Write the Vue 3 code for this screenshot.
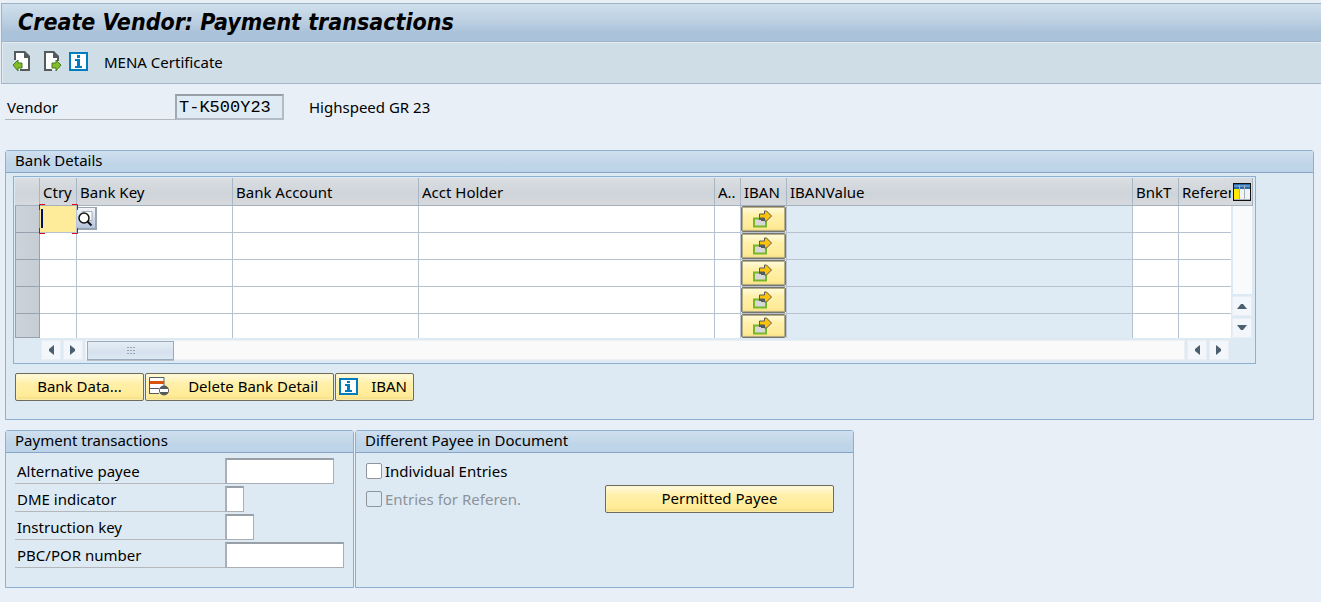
<script setup>
import { ref } from 'vue'

const vendor = ref('T-K500Y23')
const individual = ref(false)
const rows = [1, 2, 3, 4, 5]
const fields = [
  { id: 'alt-payee', label: 'Alternative payee', size: 'w-alt' },
  { id: 'dme', label: 'DME indicator', size: 'w-dme' },
  { id: 'instr-key', label: 'Instruction key', size: 'w-key' },
  { id: 'pbc', label: 'PBC/POR number', size: 'w-pbc' }
]
</script>

<template>
  <div class="window">
    <header class="titlebar"><h1>Create Vendor: Payment transactions</h1></header>

    <nav class="toolbar">
      <button class="tool" aria-label="Previous screen">
        <svg width="20" height="21" viewBox="0 0 20 21">
          <path d="M3 1h10l5 5v13H3z" fill="#fff" />
          <path d="M3 10V1h9M17 6v13H8" fill="none" stroke="#555a5e" stroke-width="2" />
          <path d="M12 0h1l5 5v2h-6z" fill="#555a5e" />
          <path d="M0 9h6v11H0z" fill="#cfdde7" />
          <path d="M1 14l5-5v3h4v5H6v3z" fill="#86bc25" stroke="#3f7d26" />
        </svg>
      </button>
      <button class="tool tool-next" aria-label="Next screen">
        <svg width="20" height="21" viewBox="0 0 20 21">
          <path d="M2 1h10l5 5v13H2z" fill="#fff" />
          <path d="M10 19H3V1h8M16 6v4" fill="none" stroke="#555a5e" stroke-width="2" />
          <path d="M11 0h1l5 5v2h-6z" fill="#555a5e" />
          <path d="M19 14l-5-5v3h-4v5h4v3z" fill="#86bc25" stroke="#3f7d26" />
        </svg>
      </button>
      <button class="tool" aria-label="Information">
        <svg width="19" height="19" viewBox="0 0 19 19">
          <path d="M1 1h17v17H1z" fill="#fff" stroke="#007cc0" stroke-width="2" />
          <path d="M8 3h3v3H8zM6 7h5v7h2v2H6v-2h2V9H6z" fill="#007cc0" />
        </svg>
      </button>
      <button class="tool tool-text">MENA Certificate</button>
    </nav>

    <main>
      <div class="vendor">
        <label for="vendor">Vendor</label>
        <input id="vendor" v-model="vendor" readonly />
        <span>Highspeed GR 23</span>
      </div>

      <section class="group bank">
        <h2>Bank Details</h2>
        <div class="bank-body">
          <div class="grid-box">
            <div class="grid-top">
              <table>
                <colgroup>
                  <col class="c-sel" /><col class="c-ctry" /><col class="c-key" /><col class="c-acct" />
                  <col class="c-holder" /><col class="c-a" /><col class="c-iban" /><col />
                  <col class="c-bnkt" /><col class="c-ref" />
                </colgroup>
                <thead>
                  <tr>
                    <th></th><th>Ctry</th><th>Bank Key</th><th>Bank Account</th><th>Acct Holder</th>
                    <th>A..</th><th>IBAN</th><th>IBANValue</th><th>BnkT</th><th>Referen</th>
                  </tr>
                </thead>
                <tbody>
                  <tr v-for="r in rows" :key="r">
                    <td class="sel"></td>
                    <td :class="{ active: r === 1 }">
                      <input :aria-label="'Ctry ' + r" />
                      <template v-if="r === 1">
                        <svg class="corners" width="39" height="30" viewBox="0 0 39 30">
                          <path d="M.5 6V.5H6M33 .5h5.500V6M38.500 24v5.500H33M6 29.500H.5V24" fill="none" stroke="#e00010" />
                        </svg>
                        <i class="caret"></i>
                      </template>
                    </td>
                    <td>
                      <button v-if="r === 1" class="match" aria-label="Search country">
                        <svg width="18" height="20" viewBox="0 0 18 20">
                          <path d="M5 3.500h10v9H8" fill="#fff" stroke="#a2adba" />
                          <circle cx="7" cy="10" r="5" fill="#fff" stroke="#111" stroke-width="1.500" />
                          <path d="M10.500 13.500l4 4" stroke="#111" stroke-width="2" />
                        </svg>
                      </button>
                      <input :aria-label="'Bank Key ' + r" />
                    </td>
                    <td><input :aria-label="'Bank Account ' + r" /></td>
                    <td><input :aria-label="'Acct Holder ' + r" /></td>
                    <td><input :aria-label="'A ' + r" /></td>
                    <td class="iban-cell">
                      <button class="gold" :aria-label="'IBAN ' + r">
                        <svg width="22" height="18" viewBox="0 0 22 18">
                          <path d="M1 8.500h12v8H1z" fill="#d8d8d8" stroke="#77b82a" stroke-width="2" />
                          <path d="M6 8h6v3H8v-1H6z" fill="#555a5e" />
                          <path d="M6.500 4h5V1h2l5 5-5 5h-2V8h-5z" fill="#fdc20b" stroke="#555a5e" />
                        </svg>
                      </button>
                    </td>
                    <td class="readonly"></td>
                    <td><input :aria-label="'BnkT ' + r" /></td>
                    <td><input :aria-label="'Reference ' + r" /></td>
                  </tr>
                </tbody>
              </table>
              <div class="vscroll">
                <button class="config" aria-label="Table settings">
                  <svg width="18" height="18" viewBox="0 0 18 18">
                    <path d="M0 0h18v18H0z" fill="#101010" />
                    <path d="M1 1h16v16H1z" fill="#eef4fa" />
                    <path d="M1 1h16v5H1z" fill="#2a6aa8" />
                    <path d="M1 2h5v2H1zM7 2h4v2H7zM12 2h5v2h-5z" fill="#5e93cc" />
                    <path d="M1 6h5v11H1z" fill="#ffea00" />
                    <path d="M6.500 2v15M11.500 2v15M1 16.500h16" stroke="#a9b2ba" />
                  </svg>
                </button>
                <div class="vtrack"></div>
                <button class="arrow" aria-label="Scroll up"><svg width="10" height="6" viewBox="0 0 10 6"><path d="M0 6h10L6 1H4z" fill="#4b5f6e" /></svg></button>
                <button class="arrow" aria-label="Scroll down"><svg width="10" height="6" viewBox="0 0 10 6"><path d="M0 0h10L6 5H4z" fill="#4b5f6e" /></svg></button>
              </div>
            </div>
            <div class="hscroll">
              <button class="arrow" aria-label="First column"><svg width="6" height="10" viewBox="0 0 6 10"><path d="M6 0v10L1 6V4z" fill="#4b5f6e" /></svg></button>
              <button class="arrow" aria-label="Column right"><svg width="6" height="10" viewBox="0 0 6 10"><path d="M0 0v10l5-4V4z" fill="#4b5f6e" /></svg></button>
              <div class="htrack">
                <div class="thumb">
                  <svg width="8" height="7" viewBox="0 0 8 7"><path d="M0 .5h2M3 .5h2M6 .5h2M0 3.500h2M3 3.500h2M6 3.500h2M0 6.500h2M3 6.500h2M6 6.500h2" stroke="#98a6b4" /></svg>
                </div>
              </div>
              <button class="arrow" aria-label="Column left"><svg width="6" height="10" viewBox="0 0 6 10"><path d="M6 0v10L1 6V4z" fill="#4b5f6e" /></svg></button>
              <button class="arrow" aria-label="Last column"><svg width="6" height="10" viewBox="0 0 6 10"><path d="M0 0v10l5-4V4z" fill="#4b5f6e" /></svg></button>
            </div>
          </div>

          <div class="actions">
            <button class="gold b-data">Bank Data...</button>
            <button class="gold b-delete">
              <svg width="21" height="19" viewBox="0 0 21 19">
                <path d="M1 1h14v15H1z" fill="#fff" />
                <path d="M10 16.500H1M15 9V.5H.5V17M1 11.500h9" fill="none" stroke="#555a5e" />
                <path d="M1 4h14v3H1z" fill="#d9530f" />
                <circle cx="15" cy="13.500" r="5" fill="#555a5e" />
                <path d="M11 12h8v3h-8z" fill="#fff" />
              </svg>
              <span>Delete Bank Detail</span>
            </button>
            <button class="gold b-iban">
              <svg width="19" height="17" viewBox="0 0 19 17">
                <path d="M1 1h17v15H1z" fill="#fff" stroke="#007cc0" stroke-width="2" />
                <path d="M8 3h3v2H8zM6 6h5v6h2v2H6v-2h2V8H6z" fill="#007cc0" />
              </svg>
              <span>IBAN</span>
            </button>
          </div>
        </div>
      </section>

      <div class="lower">
        <section class="group payment">
          <h2>Payment transactions</h2>
          <div class="fields">
            <div v-for="f in fields" :key="f.id" class="field">
              <label :for="f.id">{{ f.label }}</label>
              <input :id="f.id" :class="f.size" />
            </div>
          </div>
        </section>
        <section class="group payee">
          <h2>Different Payee in Document</h2>
          <div class="payee-body">
            <div class="checks">
              <label><input v-model="individual" type="checkbox" />Individual Entries</label>
              <label class="off"><input type="checkbox" disabled />Entries for Referen.</label>
            </div>
            <button class="gold b-payee">Permitted Payee</button>
          </div>
        </section>
      </div>
    </main>
  </div>
</template>

<style>
body { background: #e8eff6; }
</style>

<style scoped>
* { box-sizing: border-box; }
.window {
  min-height: 100vh;
  padding: 3px 0 0 1px;
  background: #e8eff6;
  color: #000;
  font: 15px/20px "Noto Sans", "Open Sans", sans-serif;
}
button, input { font: inherit; color: inherit; margin: 0; padding: 0; border: 0; }
button { background: none; }
svg { display: block; flex: none; }
h1, h2 { margin: 0; }

.titlebar {
  height: 39px;
  padding: 0 16px;
  border: solid #9fb2c6;
  border-width: 1px 0 1px 1px;
  background: linear-gradient(#cfdfec, #bdd0e2 45%, #abc3da 75%, #abc3da);
}
h1 { font: italic bold 23px/36px "DejaVu Sans Condensed", "DejaVu Sans", sans-serif; }
.toolbar {
  height: 42px;
  display: flex;
  align-items: center;
  padding: 0 10px 2px;
  border: solid #a3b5c7;
  border-width: 0 0 1px 1px;
  background: #cfdde7;
  box-shadow: inset 1px 1px #e4edf4;
}
.tool-next { margin: 0 7px 0 10px; }
.tool-text { margin-left: 16px; }

main { padding: 10px 7px 14px 4px; }
.vendor { display: flex; align-items: center; }
.vendor label { width: 170px; height: 26px; padding-left: 2px; line-height: 26px; border-bottom: 1px solid #b4b8bc; }
.vendor input {
  width: 109px; height: 26px; padding: 0 2px;
  border: 2px solid #b3bcc5; border-top-color: #989fa6; border-left-color: #a0a8b0;
  background: #deeaf4;
  font: 17px/22px "Liberation Mono", monospace;
}
.vendor span { margin-left: 25px; }

.group { border: 1px solid #8eafd0; border-radius: 3px 3px 0 0; background: #deeaf3; }
.group h2 {
  height: 22px; padding: 0 9px;
  border-bottom: 1px solid #86a5c8;
  background: linear-gradient(#cfdfee, #bfd5e8 60%, #bdd3e8);
  font-size: 15px; font-weight: normal; line-height: 19px;
}
.bank { margin-top: 30px; }
.bank-body { padding: 3px 57px 18px 7px; }
.grid-box { border: 1px solid #8eafd0; padding: 1px 2px 3px 1px; }
.grid-top { display: flex; }
table { flex: 1; min-width: 0; width: 100%; table-layout: fixed; border-collapse: separate; border-spacing: 0; }
.c-sel { width: 25px; } .c-ctry { width: 37px; } .c-key { width: 156px; } .c-acct { width: 186px; }
.c-holder { width: 296px; } .c-a { width: 26px; } .c-iban { width: 46px; } .c-bnkt { width: 46px; } .c-ref { width: 52px; }
th {
  height: 28px; padding: 0 0 0 3px;
  border-right: 1px solid #a9b6c4; border-bottom: 1px solid #a5b0bd;
  background: linear-gradient(#dadee2, #cfd4da 60%, #d6dade);
  font-weight: normal; text-align: left; white-space: nowrap; overflow: hidden;
}
th:last-child, td:last-child { border-right: 0; }
td { position: relative; height: 27px; padding: 0; border-right: 1px solid #b7c2d0; border-bottom: 1px solid #b7c2d0; background: #fff; }
tr:last-child td { height: 24px; border-bottom: 0; }
td input { display: block; width: 100%; height: 22px; background: transparent; outline: 0; }
td.sel { border: 1px solid #98a2ae; border-top: 0; background: linear-gradient(90deg, #ccd3db, #c6cdd5); }
tr:last-child td.sel { border-bottom: 1px solid #98a2ae; }
td.active { background: #ffec9a; }
.corners { position: absolute; left: -1px; top: -2px; z-index: 2; }
.caret { position: absolute; left: 1px; top: 3px; width: 2px; height: 19px; background: #00106a; }
.match {
  position: absolute; left: 0; top: 1px; z-index: 1; width: 20px; height: 23px;
  border: solid #9aa4b0; border-width: 1px 2px 2px 0;
  background: linear-gradient(#f3f5f8, #b3c4dc);
}
td.readonly { background: #deeaf4; }
.gold {
  display: flex; align-items: center; justify-content: center; height: 28px; padding-bottom: 2px;
  border: 1px solid #6e6b60; border-radius: 2px;
  background: linear-gradient(#fffbe0, #fff0aa 35%, #ffeb96 85%, #f2dc84);
  box-shadow: inset 0 0 0 1px rgba(255, 244, 190, .6);
  white-space: nowrap;
}
.iban-cell .gold { width: 100%; height: 26px; padding: 0; border-color: #77756c; box-shadow: inset 0 0 0 1px #b5ad84; }
tr:last-child .iban-cell .gold { height: 24px; }

.vscroll { flex: none; width: 22px; display: flex; flex-direction: column; gap: 2px; }
.config { height: 28px; display: flex; align-items: center; justify-content: center; border: solid #a5b0bd; border-width: 0 1px 1px 0; background: #d6dade; }
.vtrack { flex: 1; margin: -2px 1px 0 2px; background: #f9fafb; }
.arrow { flex: none; display: flex; align-items: center; justify-content: center; width: 20px; height: 20px; border: 1px solid #e9eef4; background: #f3f6fa; }
.vscroll .arrow { margin-left: 1px; }
.hscroll { display: flex; gap: 2px; margin: 2px 24px 0 26px; }
.htrack { flex: 1; padding: 0 0 0 1px; border: 1px solid #eceff3; height: 20px; background: #fafafa; }
.thumb {
  display: flex; align-items: center; justify-content: center; width: 87px; height: 19px;
  border: 1px solid #9aabbd; background: linear-gradient(#e6eef5, #d5e1ee 60%, #dce8f2);
  box-shadow: 0 1px #b4bfca;
}
.actions { display: flex; gap: 1px; margin-top: 9px; padding-left: 2px; }
.b-data { width: 129px; }
.b-delete { width: 189px; justify-content: space-between; padding: 0 15px 2px 3px; }
.b-iban { width: 79px; justify-content: space-between; padding: 0 6px 2px 3px; }

.lower { display: flex; gap: 1px; margin-top: 10px; }
.payment { flex: 0 1 349px; }
.payee { flex: 0 1 499px; }
.fields { display: flex; flex-direction: column; gap: 2px; padding: 5px 9px 19px; }
.field { display: flex; }
.field label { flex: 0 0 210px; height: 26px; padding-left: 2px; line-height: 26px; border-bottom: 1px solid #b4b8bc; }
.field input { height: 26px; border: solid; border-width: 2px 1px 1px 2px; border-color: #989fa6 #a9afb5 #a9afb5 #a9afb5; background: #fff; }
.w-alt { width: 109px; } .w-dme { width: 19px; } .w-key { width: 29px; } .w-pbc { width: 119px; }
.payee-body { display: flex; justify-content: space-between; padding: 4px 19px 19px 10px; }
.checks label { display: flex; align-items: center; gap: 3px; height: 28px; }
.checks input { appearance: none; width: 16px; height: 16px; border: 1px solid #8f959b; border-radius: 2px; background: #fff; }
.checks .off { color: #8c939b; }
.checks .off input { background: #deeaf3; }
.b-payee { width: 229px; margin-top: 28px; }
</style>
